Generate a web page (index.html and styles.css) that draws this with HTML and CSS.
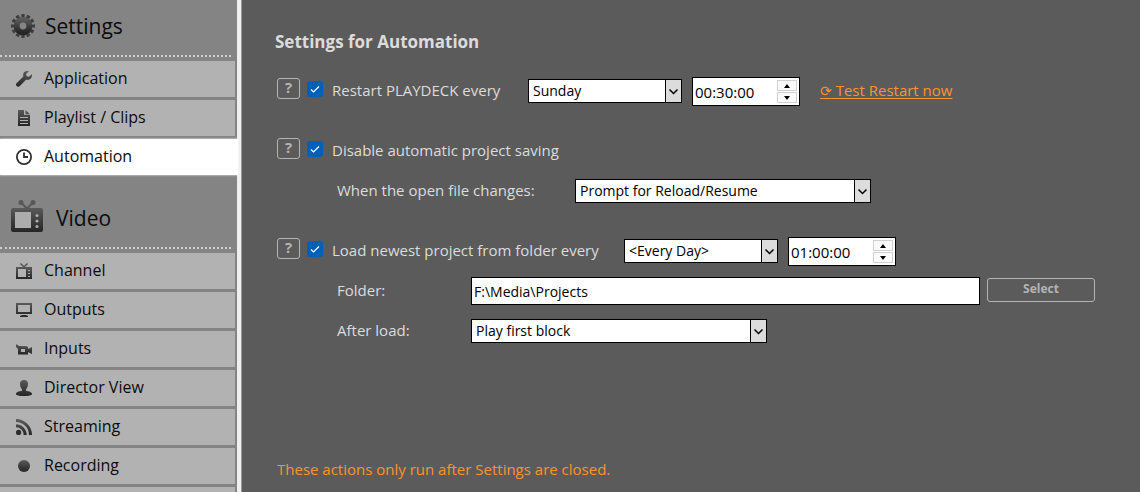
FILE: index.html
```html
<!DOCTYPE html>
<html lang="en">
<head>
    <meta charset="UTF-8">
    <meta name="viewport" content="width=device-width, initial-scale=1.0">
    <title>Settings for Automation</title>
    <link rel="stylesheet" href="styles.css">
</head>
<body>
    <svg class="defs" width="0" height="0" aria-hidden="true">
        <defs>
            <linearGradient id="ink" x1="0" y1="0" x2="0" y2="1">
                <stop offset="0" stop-color="#5a5a5a"/>
                <stop offset="1" stop-color="#262424"/>
            </linearGradient>
        </defs>
    </svg>

    <div class="layout">
        <nav class="sidebar">
            <h2 class="group-title">
                <svg width="24" height="24" viewBox="0 0 24 24">
                    <circle cx="12" cy="12" r="6.400" fill="none" stroke="url(#ink)" stroke-width="6"/>
                    <circle cx="12" cy="12" r="10.500" fill="none" stroke="#3c3c3c" stroke-width="3" pathLength="120" stroke-dasharray="6 4" stroke-dashoffset="3"/>
                </svg>
                Settings
            </h2>
            <a class="nav-item" href="#">
                <svg width="16" height="16" viewBox="0 0 16 16"><path fill="url(#ink)" d="M15.8 3.2 13 5.8 10.6 5.3 10.1 3 12.8.3C10.9-.4 8.6.2 7.6 2c-.6 1.100-.6 2.300-.2 3.400L.7 11.900c-1 1-.9 2.300-.1 3.200.9.900 2.300.9 3.200 0l6.500-6.600c1.600.500 3.300.1 4.500-1.100 1.100-1.100 1.400-2.800 1-4.200z"/></svg>
                Application
            </a>
            <a class="nav-item" href="#">
                <svg width="16" height="16" viewBox="0 0 16 16"><path fill="url(#ink)" d="M2 0h6v5h6v11H2zM9.500 0 14 4.200H9.500z"/><path stroke="#b2b2b2" d="M4 7.500h8M4 10.500h8M4 13.500h8"/></svg>
                Playlist / Clips
            </a>
            <a class="nav-item active" href="#" aria-current="page">
                <svg width="16" height="16" viewBox="0 0 16 16"><circle cx="8" cy="8" r="7.100" fill="none" stroke="#303030" stroke-width="1.800"/><path fill="none" stroke="#303030" stroke-width="1.800" d="M8 3.500V8h4"/></svg>
                Automation
            </a>

            <h2 class="group-title group-title-tall">
                <svg width="32" height="32" viewBox="0 0 32 32"><path fill="url(#ink)" fill-rule="evenodd" d="M2 8h28q2 0 2 2v20q0 2-2 2H2q-2 0-2-2V10q0-2 2-2zM4 12v16h16V12z"/><path fill="none" stroke="#585858" stroke-width="2" d="M10 2.500l6 6 6-6"/><g fill="#585858"><circle cx="10" cy="2.500" r="2.500"/><circle cx="22" cy="2.500" r="2.500"/></g><path fill="#acacac" d="M4 12h16v16H4z"/><g fill="#aaa"><circle cx="26" cy="15.500" r="1.600"/><circle cx="26" cy="21" r="1.600"/><circle cx="26" cy="26.500" r="1.600"/></g></svg>
                Video
            </h2>
            <a class="nav-item" href="#">
                <svg width="16" height="16" viewBox="0 0 16 16"><path fill="url(#ink)" fill-rule="evenodd" d="M0 4h16v12H0zM2 6v8h8V6z"/><path fill="none" stroke="#555" stroke-width="1.500" d="M4.500.5 8 4l3.500-3.500"/><path stroke="#b2b2b2" d="M12 7.500h2M12 10.500h2M12 13.500h2"/></svg>
                Channel
            </a>
            <a class="nav-item" href="#">
                <svg width="16" height="16" viewBox="0 0 16 16"><path fill="url(#ink)" fill-rule="evenodd" d="M0 1h16v11H0zM2 3v7h12V3zM6 13h4l2 1v1H4v-1z"/></svg>
                Outputs
            </a>
            <a class="nav-item" href="#">
                <svg width="16" height="16" viewBox="0 0 16 16"><path fill="url(#ink)" fill-rule="evenodd" d="M0 3l3 2 8 .2 1 1V8l4-2v7l-4-2v2.500H2V8L0 6zM5 8v3h4V8z"/></svg>
                Inputs
            </a>
            <a class="nav-item" href="#">
                <svg width="16" height="16" viewBox="0 0 16 16"><path fill="url(#ink)" d="M8 0c2.600 0 4 1.500 4 4 0 2.300-.8 4-2 5.200v1.600c3 .6 6 1.200 6 3.200 0 1.500-3.500 2-8 2s-8-.5-8-2c0-2 3-2.600 6-3.200V9.200C4.800 8 4 6.300 4 4c0-2.500 1.400-4 4-4z"/></svg>
                Director View
            </a>
            <a class="nav-item" href="#">
                <svg width="16" height="16" viewBox="0 0 16 16"><circle cx="2.600" cy="13.400" r="2.600" fill="#2c2c2c"/><path fill="none" stroke="url(#ink)" stroke-width="3" d="M0 6.800A9.200 9.200 0 0 1 9.200 16M0 1.500A14.500 14.500 0 0 1 14.500 16"/></svg>
                Streaming
            </a>
            <a class="nav-item" href="#">
                <svg width="16" height="16" viewBox="0 0 16 16"><circle cx="8" cy="8" r="6" fill="url(#ink)"/></svg>
                Recording
            </a>
            <div class="nav-item"></div>
        </nav>

        <main class="content">
            <h1>Settings for Automation</h1>

            <section class="setting">
                <div class="row">
                    <button class="help" type="button">?</button>
                    <input class="check" type="checkbox" id="restart" checked>
                    <label class="label-restart" for="restart">Restart PLAYDECK every</label>
                    <select class="select-day" aria-label="Restart day">
                        <option>Sunday</option>
                    </select>
                    <div class="time">
                        <input type="text" value="00:30:00" aria-label="Restart time">
                        <div class="time-buttons">
                            <button type="button" aria-label="Increase"><svg width="6" height="4" viewBox="0 0 6 4"><path d="M0 4 3 0l3 4z"/></svg></button>
                            <button type="button" aria-label="Decrease"><svg width="6" height="4" viewBox="0 0 6 4"><path d="M0 0h6L3 4z"/></svg></button>
                        </div>
                    </div>
                    <a class="test-link" href="#"><span class="reload">⟳</span> Test Restart now</a>
                </div>
            </section>

            <section class="setting">
                <div class="row">
                    <button class="help" type="button">?</button>
                    <input class="check" type="checkbox" id="noSave" checked>
                    <label for="noSave">Disable automatic project saving</label>
                </div>
                <div class="row sub-row">
                    <label class="label-change" for="onChange">When the open file changes:</label>
                    <select class="select-action" id="onChange">
                        <option>Prompt for Reload/Resume</option>
                    </select>
                </div>
            </section>

            <section class="setting">
                <div class="row">
                    <button class="help" type="button">?</button>
                    <input class="check" type="checkbox" id="load" checked>
                    <label class="label-load" for="load">Load newest project from folder every</label>
                    <select class="select-day" aria-label="Load day">
                        <option>&lt;Every Day&gt;</option>
                    </select>
                    <div class="time">
                        <input type="text" value="01:00:00" aria-label="Load time">
                        <div class="time-buttons">
                            <button type="button" aria-label="Increase"><svg width="6" height="4" viewBox="0 0 6 4"><path d="M0 4 3 0l3 4z"/></svg></button>
                            <button type="button" aria-label="Decrease"><svg width="6" height="4" viewBox="0 0 6 4"><path d="M0 0h6L3 4z"/></svg></button>
                        </div>
                    </div>
                </div>
                <div class="row sub-row">
                    <label class="label-folder" for="folder">Folder:</label>
                    <input class="folder" type="text" id="folder" value="F:\Media\Projects">
                    <button class="select-button" type="button">Select</button>
                </div>
                <div class="row sub-row">
                    <label class="label-folder" for="afterLoad">After load:</label>
                    <select class="select-action" id="afterLoad">
                        <option>Play first block</option>
                    </select>
                </div>
            </section>

            <p class="notice">These actions only run after Settings are closed.</p>
        </main>
    </div>
</body>
</html>
```

FILE: styles.css
```css
:root {
    --panel: #848484;
    --item: #b2b2b2;
    --content: #5b5b5b;
    --text: #dcdcdc;
    --muted: #b4b4b4;
    --accent: #f79433;
}

* {
    margin: 0;
    padding: 0;
    box-sizing: border-box;
}

body {
    background: var(--content);
    font-family: "Open Sans", "Noto Sans", sans-serif;
    font-size: 15px;
}

input,
select,
button {
    font: inherit;
    border-radius: 0;
    outline: none;
}

.defs {
    position: absolute;
}

.layout {
    display: flex;
    height: 100vh;
    overflow: hidden;
}

/* sidebar */
.sidebar {
    flex: 0 0 242px;
    display: flex;
    flex-direction: column;
    gap: 3px;
    overflow: hidden;
    background: var(--panel);
    border-right: 1px solid #999;
    box-shadow: inset -4px 0 #efefef;
}

.group-title {
    flex: none;
    display: flex;
    align-items: center;
    gap: 10px;
    width: 231px;
    height: 57px;
    margin-bottom: 1px;
    padding: 0 0 4px 11px;
    border-bottom: 2px dotted #d0d0d0;
    color: #0c0c0c;
    font-size: 21px;
    font-weight: 400;
}

.group-title-tall {
    gap: 13px;
    height: 71px;
    padding: 10px 0 0 11px;
}

.group-title-tall svg {
    margin-bottom: 4px;
}

.nav-item {
    flex: none;
    display: flex;
    align-items: center;
    gap: 12px;
    width: 235px;
    height: 36px;
    padding: 0 0 2px 16px;
    background: var(--item);
    color: #0c0c0c;
    font-size: 16px;
    text-decoration: none;
}

.nav-item svg {
    margin-top: 2px;
}

.nav-item.active {
    width: 238px;
    background: #fff;
    box-shadow: 0 0 2px #fff;
}

/* content */
.content {
    flex: 1;
    display: flex;
    flex-direction: column;
    padding: 28px 45px 9px 33px;
    color: var(--text);
}

h1 {
    margin-bottom: 21px;
    font-size: 17px;
    font-weight: 700;
    line-height: 28px;
}

.setting {
    display: grid;
    gap: 11px;
    margin-bottom: 31px;
    padding-left: 2px;
}

.row {
    display: flex;
    align-items: flex-start;
    height: 29px;
    line-height: 26px;
}

.sub-row {
    padding-left: 60px;
}

.help {
    width: 23px;
    height: 21px;
    margin: 1px 7px 0 0;
    padding-bottom: 2px;
    border: 1px solid var(--muted);
    border-radius: 3px;
    background: none;
    color: var(--muted);
    font-size: 15px;
    font-weight: 700;
    line-height: 17px;
}

.check {
    appearance: none;
    width: 16px;
    height: 16px;
    margin: 4px 9px 0 0;
    border-radius: 3px;
    background: #005fb8 url("data:image/svg+xml,%3Csvg xmlns='http://www.w3.org/2000/svg' width='16' height='16'%3E%3Cpath d='M4 8.500l2.500 2.500 5.500-5.500' fill='none' stroke='white' stroke-width='1.200'/%3E%3C/svg%3E");
}

.label-restart {
    width: 196px;
}

.label-load {
    width: 292px;
}

.label-change {
    width: 238px;
}

.label-folder {
    width: 134px;
}

select {
    appearance: none;
    height: 24px;
    margin-top: 2px;
    padding: 0 20px 1px 4px;
    border: 1px solid #000;
    background: #fff url("data:image/svg+xml,%3Csvg xmlns='http://www.w3.org/2000/svg' width='16' height='24'%3E%3Cpath d='M0 0h16v24H0z' fill='%23dcdcdc'/%3E%3Cpath d='M.5 0v24' stroke='black'/%3E%3Cpath d='M4.500 9.500l4 4 4-4' fill='none' stroke='black' stroke-width='1.500'/%3E%3C/svg%3E") no-repeat right top;
    color: #000;
    font-size: 14px;
    line-height: 20px;
}

.select-day {
    width: 154px;
}

.select-action {
    width: 296px;
}

.time {
    display: flex;
    width: 108px;
    height: 29px;
    margin-left: 10px;
    padding: 2px;
    border: 1px solid #000;
    background: #fff;
}

.time input {
    flex: 1;
    min-width: 0;
    border: 0;
    background: none;
    color: #000;
}

.time-buttons {
    display: grid;
    gap: 1px;
    width: 20px;
}

.time-buttons button {
    display: flex;
    align-items: center;
    justify-content: center;
    border: 1px solid #d0d0d0;
    background: #fafafa;
}

.test-link {
    margin-left: 20px;
    color: var(--accent);
    text-underline-offset: 2px;
}

.reload {
    font-family: "DejaVu Sans", sans-serif;
    font-size: 14px;
}

.folder {
    flex: 1;
    min-width: 0;
    height: 28px;
    padding: 0 2px;
    border: 1px solid #000;
    background: #fff;
    color: #000;
    font-size: 14px;
}

.select-button {
    width: 108px;
    height: 24px;
    margin: 1px 0 0 7px;
    padding-bottom: 2px;
    border: 1px solid var(--muted);
    border-radius: 3px;
    background: none;
    color: var(--muted);
    font-size: 12px;
    font-weight: 700;
    line-height: 20px;
}

.notice {
    margin-top: auto;
    padding-left: 2px;
    color: var(--accent);
    line-height: 28px;
}
```
